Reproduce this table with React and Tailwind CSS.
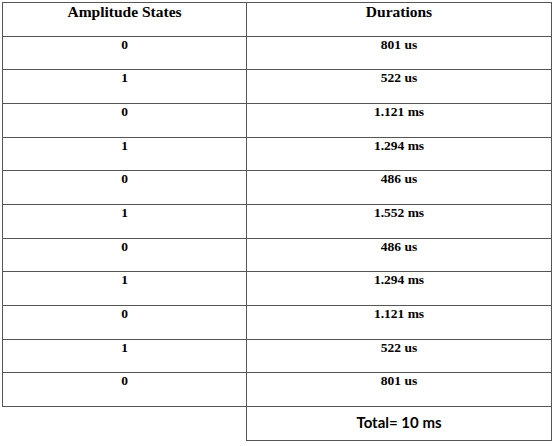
import React from 'react';

const rows = [
    ['0', '801 us'],
    ['1', '522 us'],
    ['0', '1.121 ms'],
    ['1', '1.294 ms'],
    ['0', '486 us'],
    ['1', '1.552 ms'],
    ['0', '486 us'],
    ['1', '1.294 ms'],
    ['0', '1.121 ms'],
    ['1', '522 us'],
    ['0', '801 us'],
];

const serif = { fontFamily: '"Liberation Serif", "Times New Roman", serif' };

export default function App() {
    return (
        <div className="w-[554px] h-[446px] bg-white text-black pl-[2px] pt-[2px]">
            {/* Main table */}
            <div className="w-[550px] border-t border-l border-r border-[#555]" style={serif}>
                <div className="flex h-[33.667px] border-b border-[#555] font-bold text-[15.5px] leading-[18px]">
                    <div className="w-[244px] border-r border-[#555] text-center">Amplitude States</div>
                    <div className="flex-1 text-center">Durations</div>
                </div>
                {rows.map((r, idx) => (
                    <div key={idx} className="flex h-[33.667px] border-b border-[#555] font-bold text-[13.5px] leading-[15px]">
                        <div className="w-[244px] border-r border-[#555] text-center">{r[0]}</div>
                        <div className="flex-1 text-center">{r[1]}</div>
                    </div>
                ))}
            </div>

            {/* Total box */}
            <div className="ml-[244px] w-[306px] h-[34px] border-l border-r border-b border-[#555] pt-[6px] text-center font-bold text-[15px] leading-[18px]" style={{ fontFamily: 'Lato, "Open Sans", sans-serif' }}>
                Total= 10 ms
            </div>
        </div>
    );
}
